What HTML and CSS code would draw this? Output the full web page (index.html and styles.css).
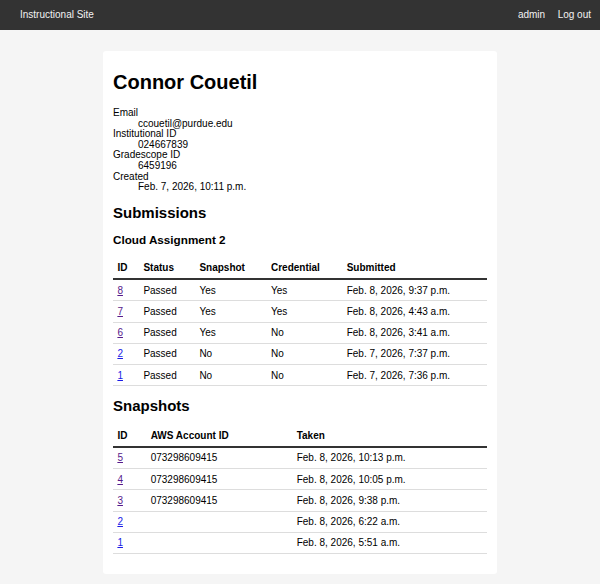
FILE: index.html
```html
<!DOCTYPE html>
<html lang="en">
<head>
<meta charset="utf-8">
<title>Connor Couetil</title>
<link rel="stylesheet" href="styles.css">
</head>
<body>
<header class="topbar">
  <a class="brand" href="#">Instructional Site</a>
  <nav class="nav">
    <a href="#">admin</a>
    <a href="#">Log out</a>
  </nav>
</header>
<main class="card">
  <h1>Connor Couetil</h1>
  <dl class="info">
    <dt>Email</dt>
    <dd>ccouetil@purdue.edu</dd>
    <dt>Institutional ID</dt>
    <dd>024667839</dd>
    <dt>Gradescope ID</dt>
    <dd>6459196</dd>
    <dt>Created</dt>
    <dd>Feb. 7, 2026, 10:11 p.m.</dd>
  </dl>

  <h2>Submissions</h2>
  <h3>Cloud Assignment 2</h3>
  <table class="grid">
    <colgroup>
      <col class="s-id"><col class="s-status"><col class="s-snap"><col class="s-cred"><col>
    </colgroup>
    <thead>
      <tr><th>ID</th><th>Status</th><th>Snapshot</th><th>Credential</th><th>Submitted</th></tr>
    </thead>
    <tbody>
      <tr><td><a class="visited" href="#">8</a></td><td>Passed</td><td>Yes</td><td>Yes</td><td>Feb. 8, 2026, 9:37 p.m.</td></tr>
      <tr><td><a class="visited" href="#">7</a></td><td>Passed</td><td>Yes</td><td>Yes</td><td>Feb. 8, 2026, 4:43 a.m.</td></tr>
      <tr><td><a class="visited" href="#">6</a></td><td>Passed</td><td>Yes</td><td>No</td><td>Feb. 8, 2026, 3:41 a.m.</td></tr>
      <tr><td><a href="#">2</a></td><td>Passed</td><td>No</td><td>No</td><td>Feb. 7, 2026, 7:37 p.m.</td></tr>
      <tr><td><a href="#">1</a></td><td>Passed</td><td>No</td><td>No</td><td>Feb. 7, 2026, 7:36 p.m.</td></tr>
    </tbody>
  </table>

  <h2>Snapshots</h2>
  <table class="grid">
    <colgroup>
      <col class="p-id"><col class="p-acct"><col>
    </colgroup>
    <thead>
      <tr><th>ID</th><th>AWS Account ID</th><th>Taken</th></tr>
    </thead>
    <tbody>
      <tr><td><a class="visited" href="#">5</a></td><td>073298609415</td><td>Feb. 8, 2026, 10:13 p.m.</td></tr>
      <tr><td><a class="visited" href="#">4</a></td><td>073298609415</td><td>Feb. 8, 2026, 10:05 p.m.</td></tr>
      <tr><td><a class="visited" href="#">3</a></td><td>073298609415</td><td>Feb. 8, 2026, 9:38 p.m.</td></tr>
      <tr><td><a href="#">2</a></td><td></td><td>Feb. 8, 2026, 6:22 a.m.</td></tr>
      <tr><td><a href="#">1</a></td><td></td><td>Feb. 8, 2026, 5:51 a.m.</td></tr>
    </tbody>
  </table>
</main>
</body>
</html>
```
FILE: styles.css
```css
html, body {
  margin: 0;
  padding: 0;
}
body {
  background: #f5f5f5;
  color: #000;
  font-family: "Liberation Sans", Arial, Helvetica, sans-serif;
  font-size: 10px;
  line-height: 10.6px;
}
.topbar {
  height: 30px;
  background: #333;
  display: flex;
  align-items: center;
  justify-content: space-between;
  padding: 0 9px 0 20px;
  line-height: 30px;
}
.topbar a {
  color: #f2f2f2;
  text-decoration: none;
}
.nav {
  display: flex;
  gap: 12.5px;
}
.card {
  display: block;
  width: 374px;
  margin: 21px auto 0;
  padding: 10px;
  background: #fff;
  border-radius: 3px;
}
h1 {
  font-size: 20px;
  line-height: 23px;
  margin: 10px 0 14px;
}
.info {
  margin: 0;
}
.info dt {
  margin: 0;
}
.info dd {
  margin: 0 0 0 25px;
}
h2 {
  font-size: 15px;
  line-height: 1.15;
  margin: 11px 0;
}
h3 {
  font-size: 11.7px;
  line-height: 1.15;
  margin: 11.7px 0;
}
.grid {
  width: 100%;
  border-collapse: collapse;
  table-layout: fixed;
  margin: 0 0 10px;
}
.grid th,
.grid td {
  text-align: left;
  padding: 4.5px 4.4px;
  line-height: 11.25px;
  white-space: nowrap;
}
.grid th {
  font-weight: bold;
  border-bottom: 2px solid #333;
}
.grid td {
  border-bottom: 1px solid #ddd;
}
.s-id { width: 26px; }
.s-status { width: 56px; }
.s-snap { width: 71.6px; }
.s-cred { width: 75.7px; }
.p-id { width: 33.3px; }
.p-acct { width: 146px; }
.grid a {
  color: #1a1ae6;
  text-decoration: underline;
}
.grid a.visited {
  color: #551a8b;
}
```
